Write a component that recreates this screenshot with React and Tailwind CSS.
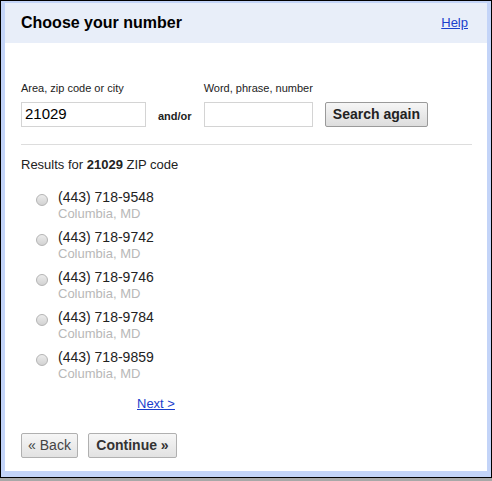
import React from "react";

const numbers = ["(443) 718-9548", "(443) 718-9742", "(443) 718-9746", "(443) 718-9784", "(443) 718-9859"];

function Radio() {
  return (
    <span className="mt-[5px] block h-[12px] w-[12px] shrink-0 rounded-full border border-[#b4b4b4] bg-gradient-to-b from-[#ececec] to-[#d2d2d2]" />
  );
}

export default function App() {
  return (
    <div className="h-[481px] w-[492px] bg-[#a8a8a8] font-['Liberation_Sans',Arial,sans-serif] text-[#222]">
      <div className="h-[478px] border border-black bg-[#c3d4f8] px-[4px] pb-[6px] pt-[2px]">
        <div className="flex h-full flex-col bg-white">
          <div className="flex h-[40px] items-center justify-between bg-[#e8eef9] pl-[16px] pr-[19px]">
            <span className="text-[16px] font-bold text-black">Choose your number</span>
            <a href="#" className="text-[13px] text-[#1a3ecc] underline">Help</a>
          </div>

          <div className="px-[16px] pt-[39px]">
            <div className="flex items-end">
              <div className="flex flex-col">
                <span className="mb-[7px] text-[11px] leading-[13px]">Area, zip code or city</span>
                <div className="flex h-[25px] w-[125px] items-center border border-[#d4d4d4] px-[3px] text-[15px] text-black">21029</div>
              </div>
              <span className="mx-[12px] mb-[3px] text-[11px] font-bold">and/or</span>
              <div className="flex flex-col">
                <span className="mb-[7px] text-[11px] leading-[13px]">Word, phrase, number</span>
                <div className="h-[25px] w-[109px] border border-[#d4d4d4]" />
              </div>
              <button className="ml-[12px] h-[25px] w-[103px] rounded-[2px] border border-[#9a9a9a] bg-gradient-to-b from-[#f6f6f6] to-[#dddddd] text-[14px] font-bold text-[#222]">
                Search again
              </button>
            </div>

            <div className="mt-[17px] -mr-px h-px bg-[#dddddd]" />

            <div className="mt-[12px] text-[13px] leading-[15px]">
              Results for <b>21029</b> ZIP code
            </div>

            <div className="mt-[17px] flex flex-col gap-[8px] pl-[15px]">
              {numbers.map((n) => (
                <div key={n} className="flex gap-[10px]">
                  <Radio />
                  <div className="flex flex-col">
                    <span className="text-[14px] leading-[17px] text-[#222]">{n}</span>
                    <span className="text-[13px] leading-[15px] text-[#b8b8b8]">Columbia, MD</span>
                  </div>
                </div>
              ))}
            </div>

            <div className="mt-[10px] pl-[116px]">
              <a href="#" className="text-[13px] text-[#1a3ecc] underline">Next &gt;</a>
            </div>

            <div className="mt-[18px] flex gap-[10px]">
              <button className="h-[25px] w-[57px] rounded-[2px] border border-[#b0b0b0] bg-gradient-to-b from-[#f6f6f6] to-[#e2e2e2] text-[14px] text-[#444]">
                « Back
              </button>
              <button className="h-[25px] w-[89px] rounded-[2px] border border-[#b0b0b0] bg-gradient-to-b from-[#f6f6f6] to-[#e2e2e2] text-[14px] font-bold text-[#333]">
                Continue »
              </button>
            </div>
          </div>
        </div>
      </div>
    </div>
  );
}
